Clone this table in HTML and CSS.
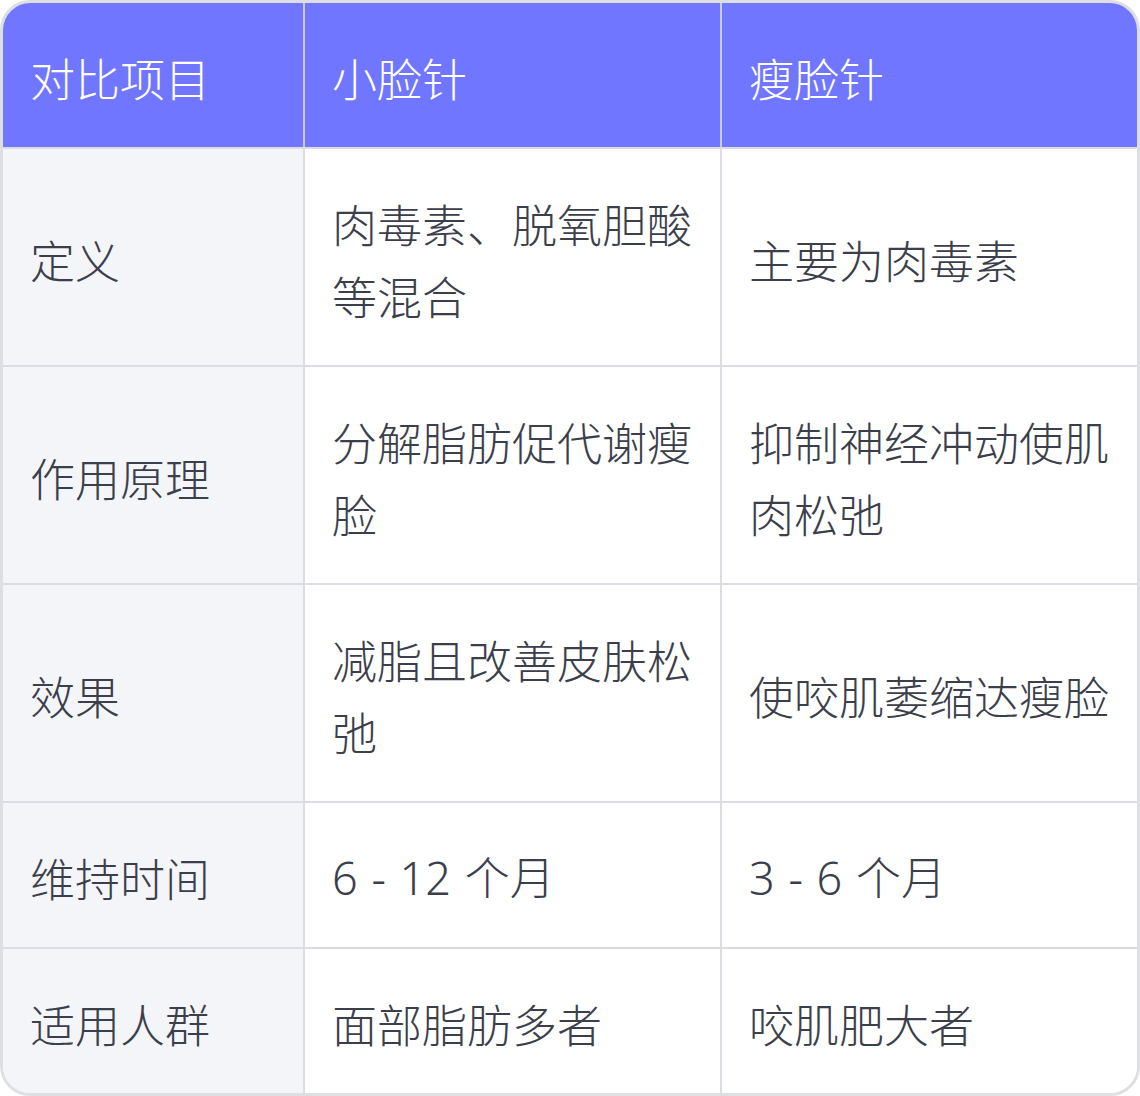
FILE: index.html
```html
<!DOCTYPE html>
<html lang="zh-CN">
<head>
<meta charset="utf-8">
<title>小脸针与瘦脸针对比</title>
<link rel="stylesheet" href="styles.css">
</head>
<body>
<div class="table-wrap">
  <table class="compare">
    <colgroup>
      <col class="c1">
      <col class="c2">
      <col class="c3">
    </colgroup>
    <thead>
      <tr>
        <th>对比项目</th>
        <th>小脸针</th>
        <th>瘦脸针</th>
      </tr>
    </thead>
    <tbody>
      <tr>
        <td class="label">定义</td>
        <td>肉毒素、脱氧胆酸等混合</td>
        <td>主要为肉毒素</td>
      </tr>
      <tr>
        <td class="label">作用原理</td>
        <td>分解脂肪促代谢瘦脸</td>
        <td>抑制神经冲动使肌肉松弛</td>
      </tr>
      <tr>
        <td class="label">效果</td>
        <td>减脂且改善皮肤松弛</td>
        <td>使咬肌萎缩达瘦脸</td>
      </tr>
      <tr>
        <td class="label">维持时间</td>
        <td class="num">6 - 12 个月</td>
        <td class="num">3 - 6 个月</td>
      </tr>
      <tr>
        <td class="label">适用人群</td>
        <td>面部脂肪多者</td>
        <td>咬肌肥大者</td>
      </tr>
    </tbody>
  </table>
</div>
</body>
</html>
```

FILE: styles.css
```css
html, body {
  margin: 0;
  padding: 0;
  background: #ffffff;
}

.table-wrap {
  width: 1140px;
  box-sizing: border-box;
  border: 3px solid #dedfe3;
  border-radius: 30px;
  overflow: hidden;
}

.compare {
  width: 1134px;
  border-collapse: collapse;
  table-layout: fixed;
  font-family: "Noto Sans CJK SC", "Noto Sans", sans-serif;
  font-weight: 300;
  font-size: 45px;
  line-height: 72px;
  color: #3b3e4b;
}

.c1 { width: 301px; }
.c2 { width: 417px; }
.c3 { width: 416px; }

.compare th,
.compare td {
  text-align: left;
  vertical-align: middle;
  padding: 39px 26px 33px 27px;
  border: 2px solid #dcdde2;
  word-break: break-all;
}

.compare tr > :first-child { border-left: 0; }
.compare tr > :last-child { border-right: 0; }
.compare thead th { border-top: 0; }
.compare tbody tr:last-child td { border-bottom: 0; }

.compare th {
  background: #7076ff;
  color: #ffffff;
  font-weight: 300;
  border-color: #c9cbf0;
  border-bottom-color: #dcdde2;
}

.compare td {
  background: #ffffff;
}

.compare td.label {
  background: #f4f5f9;
}

.compare td.num {
  font-family: "Noto Sans", "Noto Sans CJK SC", sans-serif;
  font-weight: 300;
  word-spacing: 2px;
}
```
